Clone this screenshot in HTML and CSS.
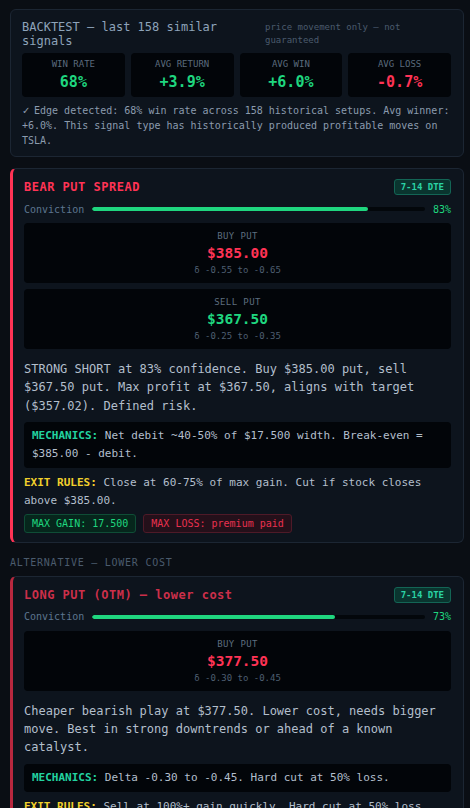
FILE: index.html
```html
<!DOCTYPE html>
<html>
<head>
<meta charset="utf-8">
<link rel="stylesheet" href="styles.css">
</head>
<body>
<div class="page">
  <section class="card backtest">
    <div class="bt-head">
      <div class="bt-title">BACKTEST — last 158 similar signals</div>
      <div class="bt-note">price movement only — not guaranteed</div>
    </div>
    <div class="stats">
      <div class="stat"><div class="stat-label">WIN RATE</div><div class="stat-val green">68%</div></div>
      <div class="stat"><div class="stat-label">AVG RETURN</div><div class="stat-val green">+3.9%</div></div>
      <div class="stat"><div class="stat-label">AVG WIN</div><div class="stat-val green">+6.0%</div></div>
      <div class="stat"><div class="stat-label">AVG LOSS</div><div class="stat-val red">-0.7%</div></div>
    </div>
    <p class="edge"><span class="check">✓</span> Edge detected: 68% win rate across 158 historical setups. Avg winner: +6.0%. This signal type has historically produced profitable moves on TSLA.</p>
  </section>

  <section class="card strat">
    <div class="strat-head">
      <div class="strat-title">BEAR PUT SPREAD</div>
      <div class="badge">7-14 DTE</div>
    </div>
    <div class="conv">
      <span class="conv-label">Conviction</span>
      <div class="track"><div class="fill" style="width:83%"></div></div>
      <span class="conv-pct">83%</span>
    </div>
    <div class="leg">
      <div class="leg-label">BUY PUT</div>
      <div class="leg-price red">$385.00</div>
      <div class="leg-delta">δ -0.55 to -0.65</div>
    </div>
    <div class="leg">
      <div class="leg-label">SELL PUT</div>
      <div class="leg-price green">$367.50</div>
      <div class="leg-delta">δ -0.25 to -0.35</div>
    </div>
    <p class="rationale">STRONG SHORT at 83% confidence. Buy $385.00 put, sell $367.50 put. Max profit at $367.50, aligns with target ($357.02). Defined risk.</p>
    <div class="mech"><b class="mech-k">MECHANICS:</b> Net debit ~40-50% of $17.500 width. Break-even = $385.00 - debit.</div>
    <p class="exit"><b class="exit-k">EXIT RULES:</b> Close at 60-75% of max gain. Cut if stock closes above $385.00.</p>
    <div class="tags">
      <span class="tag tag-gain">MAX GAIN: 17.500</span>
      <span class="tag tag-loss">MAX LOSS: premium paid</span>
    </div>
  </section>

  <div class="section-label">ALTERNATIVE — LOWER COST</div>

  <section class="card strat alt">
    <div class="strat-head">
      <div class="strat-title">LONG PUT (OTM) — lower cost</div>
      <div class="badge">7-14 DTE</div>
    </div>
    <div class="conv">
      <span class="conv-label">Conviction</span>
      <div class="track"><div class="fill" style="width:73%"></div></div>
      <span class="conv-pct">73%</span>
    </div>
    <div class="leg">
      <div class="leg-label">BUY PUT</div>
      <div class="leg-price red">$377.50</div>
      <div class="leg-delta">δ -0.30 to -0.45</div>
    </div>
    <p class="rationale">Cheaper bearish play at $377.50. Lower cost, needs bigger move. Best in strong downtrends or ahead of a known catalyst.</p>
    <div class="mech"><b class="mech-k">MECHANICS:</b> Delta -0.30 to -0.45. Hard cut at 50% loss.</div>
    <p class="exit"><b class="exit-k">EXIT RULES:</b> Sell at 100%+ gain quickly. Hard cut at 50% loss.</p>
    <div class="tags">
      <span class="tag tag-gain">MAX GAIN: unlimited</span>
      <span class="tag tag-loss">MAX LOSS: premium paid</span>
    </div>
  </section>
</div>
</body>
</html>
```

FILE: styles.css
```css
* { box-sizing: border-box; }
html, body { margin: 0; padding: 0; }
body {
  background: #0a0e14;
  font-family: "DejaVu Sans Mono", "Liberation Mono", monospace;
  color: #b3bfcc;
}
.page {
  width: 454px;
  margin-left: 10px;
  padding-top: 9px;
}
.card {
  background: #0d141d;
  border: 1px solid #1c2633;
  border-radius: 6px;
  padding: 10px 12px 9px 11px;
}
.backtest {
  margin-bottom: 11px;
  padding-bottom: 8px;
}
.bt-head {
  display: grid;
  grid-template-columns: 1fr 186px;
  gap: 8px;
  align-items: start;
}
.bt-title {
  font-size: 12px;
  line-height: 14px;
  color: #8ea3ba;
}
.bt-note {
  font-size: 9px;
  line-height: 12.5px;
  color: #4b5b6d;
  padding-top: 1px;
}
.stats {
  display: grid;
  grid-template-columns: repeat(4, 1fr);
  gap: 6px;
  margin-top: 5px;
}
.stat {
  background: #020509;
  border-radius: 4px;
  padding: 5px 4px 6px;
  text-align: center;
}
.stat-label {
  font-size: 9px;
  line-height: 12px;
  color: #5b6b7d;
}
.stat-val {
  font-size: 15px;
  line-height: 18px;
  font-weight: bold;
  margin-top: 3px;
}
.green { color: #1fd67f; }
.red { color: #ff3355; }
.edge {
  margin: 6px 0 0;
  font-size: 10px;
  line-height: 15px;
  color: #8b9bae;
}
.check {
  display: inline-block;
  width: 6px;
  font-family: "DejaVu Sans", sans-serif;
  font-size: 10px;
  line-height: 10px;
}

.strat { border-left: 3px solid #ff3355; }
.strat-head {
  display: flex;
  justify-content: space-between;
  align-items: center;
  height: 16px;
}
.strat-title {
  font-size: 12px;
  font-weight: bold;
  letter-spacing: 0.5px;
  color: #ff3355;
}
.badge {
  font-size: 9px;
  font-weight: bold;
  line-height: 14px;
  padding: 0 6px;
  color: #2ad3a5;
  background: #0a352f;
  border: 1px solid #136555;
  border-radius: 3px;
}
.conv {
  display: flex;
  align-items: center;
  gap: 8px;
  margin-top: 8px;
  height: 12px;
}
.conv-label {
  font-size: 10px;
  color: #5d7690;
}
.track {
  flex: 1;
  height: 4px;
  background: #03070b;
  border-radius: 2px;
  overflow: hidden;
}
.fill {
  height: 100%;
  background: #1fd67f;
  border-radius: 2px;
}
.conv-pct {
  font-size: 10px;
  color: #1fd67f;
}
.leg {
  background: #020509;
  border-radius: 4px;
  padding: 7px 0;
  text-align: center;
  margin-top: 6px;
}
.conv + .leg { margin-top: 8px; }
.leg-label {
  font-size: 9px;
  line-height: 12px;
  letter-spacing: 0.4px;
  color: #5d6d7f;
}
.leg-price {
  font-size: 14.5px;
  line-height: 18px;
  font-weight: bold;
  margin: 2px 0 2px;
}
.leg-delta {
  font-size: 9px;
  line-height: 12px;
  color: #4e5f71;
}
.rationale {
  margin: 11px 0 0;
  font-size: 12px;
  line-height: 18.3px;
  color: #b3bfcc;
}
.mech {
  margin-top: 7px;
  background: #020509;
  border-radius: 4px;
  padding: 5px 8px;
  font-size: 11px;
  line-height: 18.3px;
  color: #b3bfcc;
}
.mech-k { color: #22d3a0; }
.exit {
  margin: 6px 0 0;
  font-size: 11px;
  line-height: 17.4px;
  color: #b3bfcc;
}
.exit-k { color: #f2d02c; }
.tags {
  display: flex;
  gap: 7px;
  margin-top: 5px;
}
.tag {
  font-size: 10px;
  line-height: 11px;
  padding: 3px 7px 2.5px;
  border-radius: 3px;
  border: 1px solid;
}
.tag-gain {
  color: #1fd67f;
  background: #06261c;
  border-color: #0f4d36;
}
.tag-loss {
  color: #e8304f;
  background: #24101a;
  border-color: #4e1a28;
}
.section-label {
  margin: 14px 0 7px;
  font-size: 10px;
  line-height: 12px;
  letter-spacing: 0.75px;
  color: #4b5b6d;
}
.alt { border-left-color: #b8283f; }
.alt .strat-title { color: #cc2f4a; }
```
